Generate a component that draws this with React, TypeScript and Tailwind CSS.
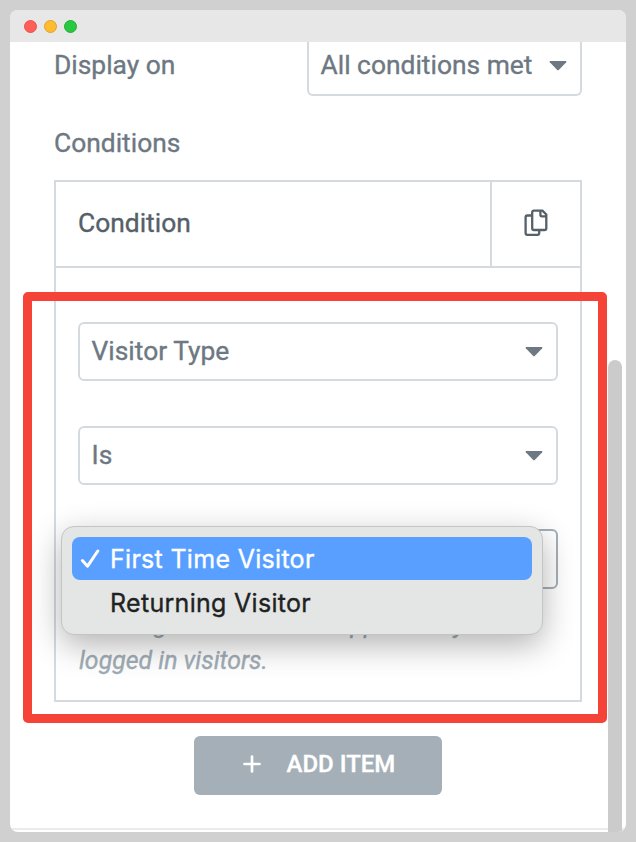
import React from "react";

function Caret({ className = "" }: { className?: string }) {
  return (
    <svg className={className} width="18" height="10" viewBox="0 0 18 10" fill="#6d7882">
      <path d="M1.3 0H16.7Q18 0.2 17.2 1.2L10 8.8Q9 9.8 8 8.8L0.8 1.2Q0 0.2 1.3 0Z" />
    </svg>
  );
}

function Select({ label }: { label: string }) {
  return (
    <div className="flex h-[59px] items-center justify-between rounded-md border-2 border-[#d5dadf] pr-[13px] pl-[11.5px] text-[#6d7882]">
      <span className="pb-px">{label}</span>
      <Caret />
    </div>
  );
}

function CopyIcon() {
  return (
    <svg width="24" height="28" viewBox="0 0 24 28" fill="none" stroke="#556068" strokeWidth="2.3" strokeLinejoin="round">
      <path d="M7.5 6.5H3.4Q1.6 6.5 1.6 8.3V24Q1.6 25.8 3.4 25.8H13.4Q15.2 25.8 15.2 24V21" />
      <path d="M10 1.6H18.4L22.3 5.5V19.2Q22.3 21 20.5 21H10Q8.2 21 8.2 19.2V3.4Q8.2 1.6 10 1.6Z" />
      <path d="M16.4 1.6V5.8Q16.4 7.4 18 7.4H22.3" />
    </svg>
  );
}

export default function App() {
  return (
    <main className="h-[842px] w-[636px] bg-[#d0d0d0] p-2.5 font-['Roboto',sans-serif] text-[26.4px] leading-8 [-webkit-text-stroke:0.35px]">
      <div className="relative flex h-[822px] flex-col overflow-hidden rounded-lg bg-white">
        <header className="flex h-8 shrink-0 items-center gap-[7px] bg-[#e7e7e7] pt-px pl-[13.5px]">
          <i className="size-[13px] rounded-full border border-[#e9504a] bg-[#ff5f57]" />
          <i className="size-[13px] rounded-full border border-[#dfa02f] bg-[#febc2e]" />
          <i className="size-[13px] rounded-full border border-[#1fae35] bg-[#28c840]" />
        </header>

        <section className="mr-11 ml-11 flex h-[54px] shrink-0 justify-between text-[#6d7882]">
          <span className="pt-[7px]">Display on</span>
          <div className="flex w-[275px] justify-between rounded-b-md border-2 border-t-0 border-[#d5dadf] pr-[13px] pl-[11.5px]">
            <span className="pt-[7px]">All conditions met</span>
            <Caret className="mt-[19px]" />
          </div>
        </section>

        <h2 className="mt-[31px] ml-11 h-8 text-[#6d7882]">Conditions</h2>

        <section className="mx-11 mt-[21px] h-[522px] shrink-0 border-2 border-[#d5dadf]">
          <div className="flex h-[86px] border-b-2 border-[#d5dadf] text-[#556068]">
            <span className="flex-1 pt-[25px] pl-[22px]">Condition</span>
            <div className="flex w-[90px] items-start justify-center border-l-2 border-[#d5dadf] pt-[27px]">
              <CopyIcon />
            </div>
          </div>
          <div className="flex flex-col px-[22px] pt-[54px]">
            <Select label="Visitor Type" />
            <div className="mt-[45px]">
              <Select label="Is" />
            </div>
            <div className="mt-11 flex h-[60px] items-center justify-end rounded-md border-2 border-[#a4afb7] pr-[13px]">
              <Caret />
            </div>
          </div>
          <p className="mt-[18px] pl-[23px] text-[24.9px] leading-[35.5px] whitespace-nowrap text-[#a0acb5] italic">
            Warning: This condition applies only to<br />logged in visitors.
          </p>
        </section>

        <div className="mx-auto mt-[34px] flex h-[59px] w-[248px] shrink-0 items-center rounded-md bg-[#a4afb7] pb-[3px] pl-[49px] text-2xl font-medium text-white">
          <svg width="18" height="18" viewBox="0 0 18 18" stroke="white" strokeWidth="2.7" strokeLinecap="round">
            <path d="M9 1.5V16.5M1.5 9H16.5" />
          </svg>
          <span className="ml-[25.5px]">ADD ITEM</span>
        </div>
        <div className="mt-[33px] h-0.5 shrink-0 bg-[#e9ebee]" />

        <div className="absolute top-[350px] right-1 bottom-0 w-3.5 rounded-t-full bg-[#cbcbcb]" />
        <div className="absolute top-[282px] left-[13px] h-[431px] w-[584px] rounded-[5px] border-[9px] border-[#f64337]" />

        <div className="absolute top-[516px] left-[51px] h-[109px] w-[482px] rounded-[13px] border border-[#c3c5c4] bg-[#e4e6e5] px-[10px] pt-[9.7px] font-['Inter',sans-serif] text-[25px] tracking-[0.3px] text-[#202222] shadow-[0_10px_32px_rgba(0,0,0,0.3)]">
          <div className="flex h-[43.6px] items-center rounded-lg bg-[#589fff] pl-2 text-white">
            <svg width="20" height="20" viewBox="0 0 20 20" fill="none" stroke="white" strokeWidth="3" strokeLinecap="round" strokeLinejoin="round">
              <path d="M2.4 12.6L7.6 18.2L17.8 3" />
            </svg>
            <span className="ml-[10px] pt-0.5">First Time Visitor</span>
          </div>
          <div className="flex h-11 items-center pt-0.5 pl-[38px]">Returning Visitor</div>
        </div>
      </div>
    </main>
  );
}
